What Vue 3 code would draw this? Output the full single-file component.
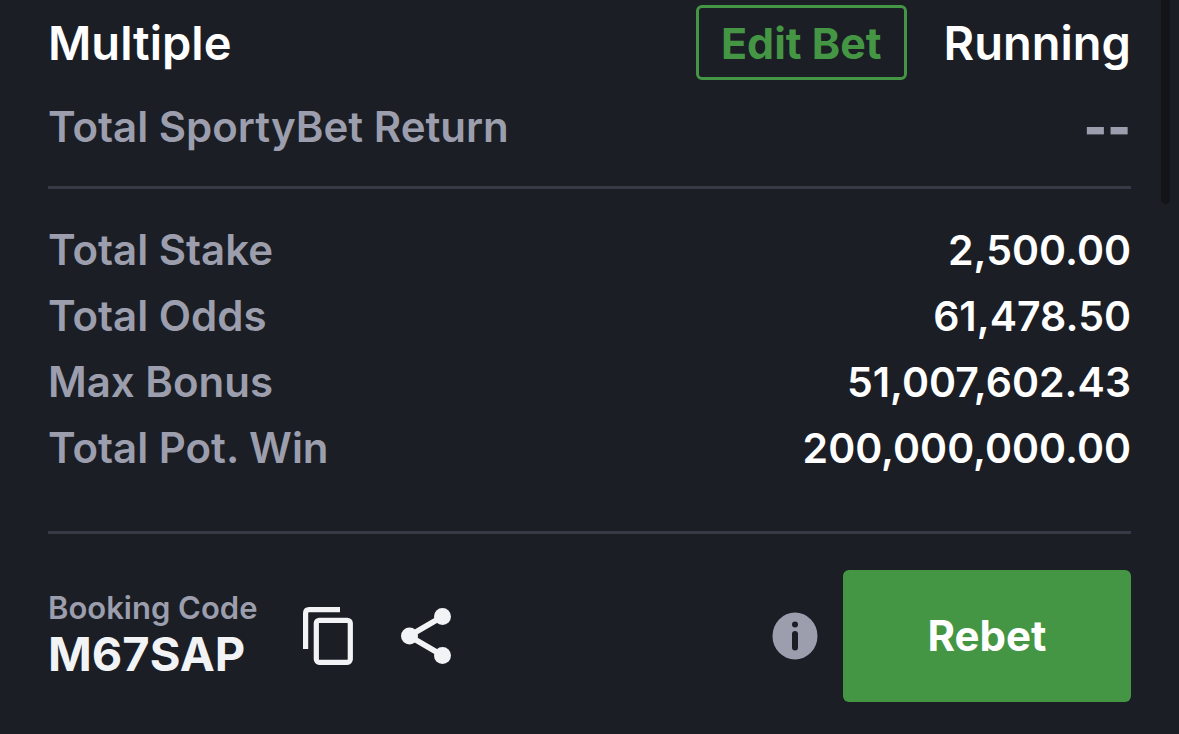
<script setup>
const totals = [
  { label: 'Total Stake', value: '2,500.00' },
  { label: 'Total Odds', value: '61,478.50' },
  { label: 'Max Bonus', value: '51,007,602.43' },
  { label: 'Total Pot. Win', value: '200,000,000.00' }
]
</script>

<template>
  <main class="ticket">
    <header class="head">
      <h1 class="title">Multiple</h1>
      <button class="edit" type="button">Edit Bet</button>
      <span class="title">Running</span>
    </header>

    <dl class="return">
      <div class="row">
        <dt>Total SportyBet Return</dt>
        <dd class="empty">--</dd>
      </div>
    </dl>

    <dl class="totals">
      <div v-for="item in totals" :key="item.label" class="row">
        <dt>{{ item.label }}</dt>
        <dd>{{ item.value }}</dd>
      </div>
    </dl>

    <footer class="foot">
      <div class="booking">
        <span class="booking-label">Booking Code</span>
        <strong class="booking-code">M67SAP</strong>
      </div>
      <button class="icon copy" type="button" aria-label="Copy booking code">
        <svg width="50" height="58" viewBox="0 0 50 58" fill="none" stroke="#f2f3f5" stroke-width="5.200">
          <path d="M2.600 42V6Q2.600 2.600 6 2.600H37" />
          <rect x="13.300" y="13.300" width="34" height="42" rx="3" />
        </svg>
      </button>
      <button class="icon share" type="button" aria-label="Share">
        <svg width="50" height="56" viewBox="0 0 50 56" fill="#f2f3f5">
          <path d="M41.500 8.500L8 28L41.500 47.500" fill="none" stroke="#f2f3f5" stroke-width="5.500" />
          <circle cx="41.500" cy="8.500" r="8.500" />
          <circle cx="8.500" cy="28" r="8.500" />
          <circle cx="41.500" cy="47.500" r="8.500" />
        </svg>
      </button>
      <button class="icon info" type="button" aria-label="Rebet information">
        <svg width="46" height="48" viewBox="0 0 46 48">
          <ellipse cx="23" cy="24" rx="22.500" ry="23.500" fill="#9c9ead" />
          <circle cx="23" cy="12.500" r="3" fill="#1b1e25" />
          <path d="M23 22V35.500" stroke="#1b1e25" stroke-width="6" stroke-linecap="round" />
        </svg>
      </button>
      <button class="rebet" type="button">Rebet</button>
    </footer>
    <div class="thumb" aria-hidden="true"></div>
  </main>
</template>

<style>
body {
  margin: 0;
  background: #1b1e25;
}
</style>

<style scoped>
.ticket {
  position: relative;
  box-sizing: border-box;
  min-height: 100vh;
  padding: 5px 48px 32px;
  background: #1b1e25;
  color: #ffffff;
  font-family: Inter, "Liberation Sans", sans-serif;
  font-size: 42px;
  line-height: 66px;
  font-weight: 600;
}

button {
  font: inherit;
  cursor: pointer;
}

.head {
  display: flex;
  align-items: center;
  gap: 37px;
}

.title {
  margin: 0;
  font-size: 47px;
  font-weight: 600;
}

h1.title {
  margin-right: auto;
}

.edit {
  box-sizing: border-box;
  height: 75px;
  padding: 0 22px;
  border: 3px solid #449644;
  border-radius: 6px;
  background: transparent;
  color: #449644;
  font-size: 43px;
  font-weight: 700;
}

dl,
dd {
  margin: 0;
}

.row {
  display: flex;
  justify-content: space-between;
}

dt,
.empty {
  color: #9c9ead;
}

dd {
  font-size: 41px;
}

.empty {
  font-size: 50px;
  font-weight: 900;
}

.return {
  padding: 14px 0 26px;
}

.totals {
  padding: 28px 0 50px;
  border: solid #373a45;
  border-width: 3px 0;
}

.foot {
  display: flex;
  align-items: center;
  padding-top: 36px;
}

.booking {
  display: flex;
  flex-direction: column;
  padding-bottom: 4px;
}

.booking-label {
  color: #9c9ead;
  font-size: 31px;
  line-height: 40px;
  font-weight: 600;
}

.booking-code {
  color: #f2f3f5;
  font-size: 47px;
  line-height: 52px;
  font-weight: 700;
}

.icon {
  display: flex;
  padding: 0;
  border: 0;
  background: none;
}

.copy {
  margin-left: 45px;
}

.share {
  margin-left: 48px;
}

.info {
  margin-left: auto;
  margin-right: 25px;
}

.rebet {
  width: 288px;
  height: 132px;
  border: 0;
  border-radius: 6px;
  background: #449644;
  color: #ffffff;
  font-size: 42px;
  font-weight: 700;
}

.thumb {
  position: absolute;
  top: 0;
  right: 9px;
  width: 9px;
  height: 204px;
  border-radius: 0 0 5px 5px;
  background: #121417;
}
</style>
